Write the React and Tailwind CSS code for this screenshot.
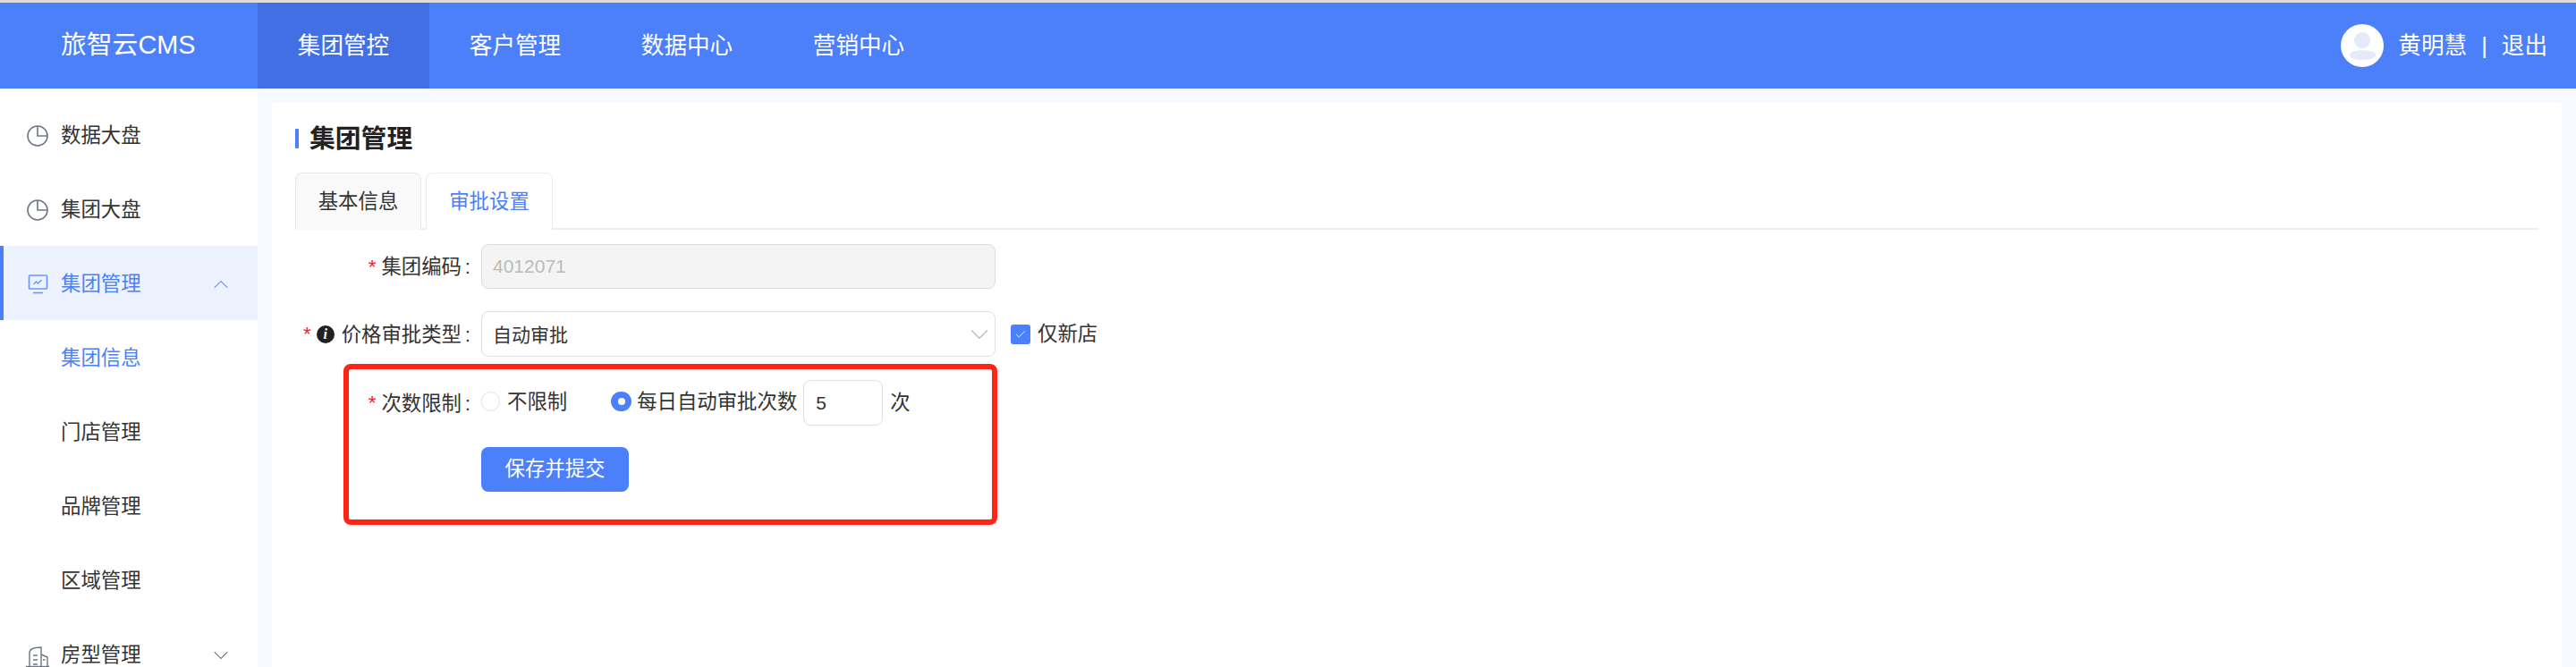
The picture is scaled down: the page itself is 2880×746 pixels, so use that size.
import React from 'react';
import { ChevronDown, ChevronUp, Check } from 'lucide-react';

const PieIcon = () => (
  <svg width="24" height="24" viewBox="0 0 24 24" fill="none" stroke="#6d7685" strokeWidth="1.6">
    <circle cx="12" cy="12" r="11" />
    <path d="M12 1v11h11" />
  </svg>
);

const ScreenIcon = () => (
  <svg width="24" height="26" viewBox="0 0 24 26" fill="none" stroke="#4c7ffa" strokeWidth="1.6" className="opacity-80">
    <rect x="2.500" y="3" width="20" height="15" rx="0.8" />
    <path d="M7.500 13l3-3 2 2 4-4" strokeWidth="1.4" />
    <path d="M7 22.500h11" />
  </svg>
);

const BuildingIcon = () => (
  <svg width="26" height="28" viewBox="0 0 26 28" fill="none" stroke="#6d7685" strokeWidth="1.4" className="-ml-px">
    <path d="M4 26V11C4 7 9 5 17 5V26" />
    <path d="M17 13L24 16V26" />
    <path d="M8 14h5M8 19h5M8 24h5M19 19h2.500" />
    <path d="M0 26.500H26" />
  </svg>
);

const menu = [
  { label: '数据大盘', icon: <PieIcon /> },
  { label: '集团大盘', icon: <PieIcon /> },
  { label: '集团管理', icon: <ScreenIcon />, active: true, chevron: 'up' },
  { label: '集团信息', sub: true, current: true },
  { label: '门店管理', sub: true },
  { label: '品牌管理', sub: true },
  { label: '区域管理', sub: true },
  { label: '房型管理', icon: <BuildingIcon />, chevron: 'down' },
];

function Sidebar() {
  return (
    <aside className="w-[288px] shrink-0 bg-white pt-[10px] overflow-hidden">
      {menu.map(item => (
        <div
          key={item.label}
          className={`relative h-[83px] pt-[3px] flex items-center pr-[27px] text-[22.4px] ${
            item.active ? 'bg-[#ecf3ff] text-[#4c7ffa]' : item.current ? 'text-[#4c7ffa]' : 'text-[#333333]'
          } ${item.sub ? 'pl-[68px]' : 'pl-[30px]'}`}
        >
          {item.active && <span className="absolute left-0 top-0 bottom-0 w-1 bg-[#4c7ffa]" />}
          {item.icon && <span className="w-[38px] shrink-0 flex items-center">{item.icon}</span>}
          <span>{item.label}</span>
          {item.chevron === 'up' && <ChevronUp size={28} strokeWidth={0.9} className="ml-auto text-[#4c7ffa]" />}
          {item.chevron === 'down' && <ChevronDown size={28} strokeWidth={0.9} className="ml-auto text-[#555555]" />}
        </div>
      ))}
    </aside>
  );
}

function Label({ children, info }) {
  return (
    <div className="w-[196px] mr-3 shrink-0 flex items-center justify-end text-[22.4px] text-[#333333] whitespace-nowrap pt-[2px]">
      <span className="text-[#f5222d] mr-[6px] text-[22.4px] leading-none">*</span>
      {info && (
        <span className="mr-2 w-5 h-5 rounded-full bg-[#222222] text-white flex items-center justify-center text-[16px] italic font-bold font-['Liberation_Serif',serif]">i</span>
      )}
      {children}
      <span className="w-[10px] text-right">:</span>
    </div>
  );
}

export default function App() {
  return (
    <div className="w-[2880px] h-[746px] overflow-hidden flex flex-col bg-[#f7faff] font-['Liberation_Sans','Noto_Sans_CJK_SC',sans-serif]">
      <div className="h-[3px] shrink-0 bg-[#dcdcdc]" />
      <header className="h-[96px] shrink-0 bg-[#4c7ffa] flex items-center text-white">
        <div className="w-[288px] shrink-0 pl-[68px] text-[28.8px]">旅智云CMS</div>
        {['集团管控', '客户管理', '数据中心', '营销中心'].map((name, i) => (
          <div
            key={name}
            className={`w-[192px] h-full flex items-center justify-center text-[25.6px] ${i === 0 ? 'bg-[#4270e4]' : ''}`}
          >
            {name}
          </div>
        ))}
        <div className="ml-auto pr-[32px] flex items-center text-[25.6px]">
          <div className="w-12 h-12 rounded-full bg-white mr-4 relative overflow-hidden">
            <span className="absolute left-[15px] top-[9px] w-[18px] h-[18px] rounded-full bg-[#e6eaf8]" />
            <span className="absolute left-[10px] top-[29px] w-[29px] h-[11px] rounded-[50%] bg-[#e6eaf8]" />
          </div>
          <span>黄明慧</span>
          <span className="mx-[16px]">|</span>
          <span>退出</span>
        </div>
      </header>

      <div className="flex-1 min-h-0 flex">
        <Sidebar />
        <main className="flex-1 min-w-0 pt-4 pl-4 pr-4">
          <div className="relative h-full bg-white pl-[26px] pr-[26px] pt-[29px]">
            <div className="flex items-center h-[22px]">
              <span className="w-1 h-[22px] bg-[#4c7ffa] rounded-[1px] mr-3" />
              <h1 className="text-[28.8px] font-bold text-[#222222] leading-none">集团管理</h1>
            </div>

            <div className="flex mt-[27px] h-[64px] border-b-2 border-[#eeeeee]">
              <div className="w-[141px] h-[64px] flex items-center justify-center text-[22.4px] text-[#333333] bg-[#f9f9f9] border border-b-0 border-[#e8e8e8] rounded-t-lg">
                基本信息
              </div>
              <div className="w-[142px] h-[64px] ml-[5px] flex items-center justify-center text-[22.4px] text-[#4c7ffa] bg-white border border-b-0 border-[#eeeeee] rounded-t-lg">
                审批设置
              </div>
            </div>

            <div className="mt-4 flex items-center h-[50px]">
              <Label>集团编码</Label>
              <div className="w-[575px] h-[50px] flex items-center pl-3 bg-[#f4f4f4] border border-[#dcdcdc] rounded-lg text-[21px] text-[#bbbbbb]">
                4012071
              </div>
            </div>

            <div className="mt-[25px] flex items-center h-[51px]">
              <Label info>价格审批类型</Label>
              <div className="w-[575px] h-[51px] flex items-center justify-between pl-3 bg-white border border-[#dfdfe6] rounded-lg text-[21px] text-[#333333]">
                <span className="pt-[2px]">自动审批</span>
                <ChevronDown size={34} strokeWidth={0.9} className="text-[#b4bbc6]" />
              </div>
              <span className="ml-[17px] w-[22px] h-[22px] rounded-[3px] bg-[#4c7ffa] flex items-center justify-center">
                <Check size={14} strokeWidth={1.5} className="text-white" />
              </span>
              <span className="ml-2 text-[22.4px] text-[#333333]">仅新店</span>
            </div>

            <div className="mt-[26px] flex items-center h-[51px]">
              <Label>次数限制</Label>
              <span className="w-[21px] h-[22px] rounded-full border border-[#dfe1ea] bg-white -translate-y-[2px]" />
              <span className="ml-2 text-[22.4px] text-[#333333] -translate-y-px">不限制</span>
              <span className="ml-[49px] w-[23px] h-[22px] rounded-full bg-[#4c7ffa] flex items-center justify-center -translate-y-[2px]">
                <span className="w-2 h-2 rounded-full bg-white" />
              </span>
              <span className="ml-[6px] text-[22.4px] text-[#333333] -translate-y-px whitespace-nowrap">每日自动审批次数</span>
              <div className="ml-[7px] w-[89px] h-[51px] flex items-center pl-[13px] border border-[#dfdfe6] rounded-lg text-[21px] text-[#333333]">
                5
              </div>
              <span className="ml-2 text-[22.4px] text-[#333333]">次</span>
            </div>

            <div className="mt-6 pl-[208px]">
              <button className="w-[165px] h-[50px] rounded-lg bg-[#4c7ffa] text-white text-[22.4px]">保存并提交</button>
            </div>

            <div className="absolute left-[80px] top-[292px] w-[731px] h-[180px] border-[6px] border-[#ff2416] rounded-lg pointer-events-none" />
          </div>
        </main>
      </div>
    </div>
  );
}
